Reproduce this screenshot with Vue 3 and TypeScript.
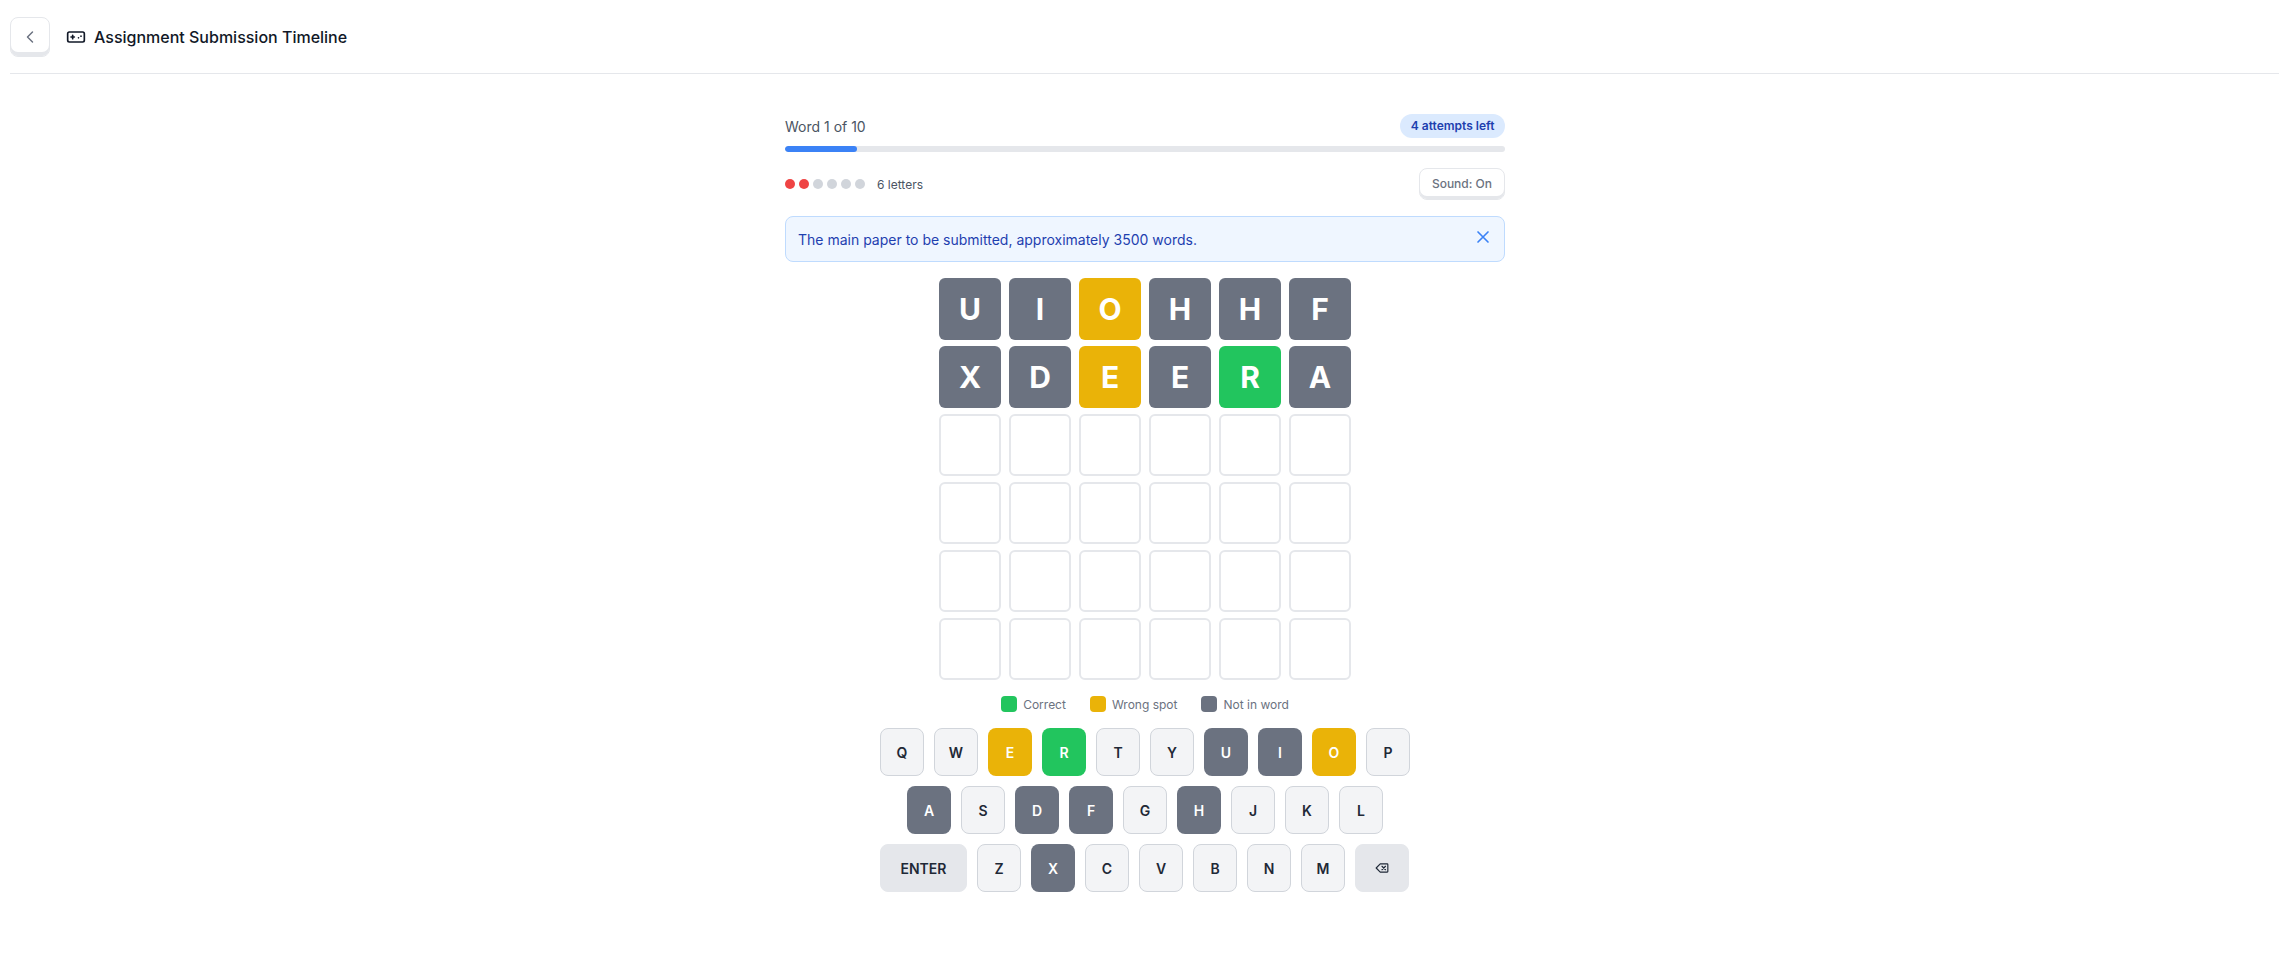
<template>
  <div class="page">
    <header class="top-bar">
      <button class="back-btn" aria-label="Back">
        <svg width="20" height="20" viewBox="0 0 24 24" fill="none" stroke="currentColor" stroke-width="1.75" stroke-linecap="round" stroke-linejoin="round"><path d="M15 18l-6-6 6-6" /></svg>
      </button>
      <svg class="game-icon" width="20" height="20" viewBox="0 0 24 24" fill="none" stroke="currentColor" stroke-width="2" stroke-linecap="round" stroke-linejoin="round">
        <rect x="2" y="6" width="20" height="12" rx="2" />
        <path d="M6 12h4M8 10v4M15 13h.01M18 11h.01" />
      </svg>
      <h1 class="title">Assignment Submission Timeline</h1>
    </header>

    <main class="game">
      <div class="progress-head">
        <span class="word-count">Word 1 of 10</span>
        <span class="attempts">4 attempts left</span>
      </div>
      <div class="progress-track"><div class="progress-fill" :style="{ width: progress + '%' }"></div></div>

      <div class="meta-row">
        <div class="meta-left">
          <div class="dots">
            <span v-for="(used, i) in dots" :key="i" class="dot" :class="{ used }"></span>
          </div>
          <span class="letters">6 letters</span>
        </div>
        <button class="sound-btn">Sound: On</button>
      </div>

      <div class="hint">
        <span>The main paper to be submitted, approximately 3500 words.</span>
        <svg class="hint-close" width="20" height="20" viewBox="0 0 24 24" fill="none" stroke="currentColor" stroke-width="2" stroke-linecap="round" stroke-linejoin="round"><path d="M18 6L6 18M6 6l12 12" /></svg>
      </div>

      <div class="board">
        <div v-for="(row, r) in board" :key="r" class="board-row">
          <div v-for="(cell, c) in row" :key="c" class="tile" :class="cell.state">{{ cell.letter }}</div>
        </div>
      </div>

      <div class="legend">
        <span class="legend-item"><i class="swatch correct"></i>Correct</span>
        <span class="legend-item"><i class="swatch present"></i>Wrong spot</span>
        <span class="legend-item"><i class="swatch absent"></i>Not in word</span>
      </div>

      <div class="keyboard">
        <div v-for="(row, r) in keyRows" :key="r" class="key-row">
          <button v-for="k in row" :key="k" class="key" :class="keyClass(k)">
            <svg v-if="k === 'BACK'" width="14" height="14" viewBox="0 0 24 24" fill="none" stroke="currentColor" stroke-width="2" stroke-linecap="round" stroke-linejoin="round">
              <path d="M21 5H9l-7 7 7 7h12a1 1 0 0 0 1-1V6a1 1 0 0 0-1-1z" />
              <path d="M18 9l-6 6M12 9l6 6" />
            </svg>
            <template v-else>{{ k }}</template>
          </button>
        </div>
      </div>
    </main>
  </div>
</template>

<script setup lang="ts">
type CellState = 'absent' | 'present' | 'correct' | 'empty';

interface Cell {
  letter: string;
  state: CellState;
}

const progress = 10;
const dots: boolean[] = [true, true, false, false, false, false];

const g: CellState = 'absent';
const y: CellState = 'present';
const v: CellState = 'correct';

function makeRow(word: string, states: CellState[]): Cell[] {
  return states.map((state, i) => ({ letter: word[i], state }));
}

const emptyRow = (): Cell[] => Array.from({ length: 6 }, () => ({ letter: '', state: 'empty' as CellState }));

const board: Cell[][] = [
  makeRow('UIOHHF', [g, g, y, g, g, g]),
  makeRow('XDEERA', [g, g, y, g, v, g]),
  emptyRow(),
  emptyRow(),
  emptyRow(),
  emptyRow(),
];

const keyRows: string[][] = [
  ['Q', 'W', 'E', 'R', 'T', 'Y', 'U', 'I', 'O', 'P'],
  ['A', 'S', 'D', 'F', 'G', 'H', 'J', 'K', 'L'],
  ['ENTER', 'Z', 'X', 'C', 'V', 'B', 'N', 'M', 'BACK'],
];

const keyStates: Record<string, CellState> = {
  E: 'present', O: 'present', R: 'correct',
  U: 'absent', I: 'absent', A: 'absent', D: 'absent', F: 'absent', H: 'absent', X: 'absent',
};

function keyClass(k: string): string {
  if (k === 'ENTER') return 'wide';
  if (k === 'BACK') return 'wide back';
  return keyStates[k] || '';
}
</script>

<style>
html, body {
  margin: 0;
  background: #fff;
}
</style>

<style scoped>
.page {
  padding: 0 16px 0 10px;
  font-family: Inter, "Liberation Sans", sans-serif;
  color: #111827;
  min-height: 971px;
  box-sizing: border-box;
}

.top-bar {
  margin-right: 1px;
  padding: 17px 0 16px;
  display: flex;
  align-items: center;
  border-bottom: 1px solid #e5e7eb;
}

.back-btn {
  width: 40px;
  height: 40px;
  margin-right: 16px;
  display: flex;
  align-items: center;
  justify-content: center;
  padding: 0;
  background: #fff;
  border: 1px solid #e5e7eb;
  border-radius: 8px;
  box-shadow: inset 0 -4px 0 #e5e7eb;
  color: #6b7280;
}

.game-icon {
  color: #111827;
  margin-right: 8px;
}

.title {
  margin: 0;
  font-size: 16px;
  font-weight: 500;
  line-height: 24px;
}

.game {
  width: 720px;
  margin: 0 auto;
  padding-top: 40px;
}

.progress-head {
  display: flex;
  justify-content: space-between;
  align-items: center;
  height: 24px;
  margin-bottom: 8px;
}

.word-count {
  font-size: 14px;
  color: #4b5563;
}

.attempts {
  background: #dbeafe;
  color: #1e40af;
  font-size: 12px;
  font-weight: 600;
  line-height: 24px;
  padding: 0 10.5px;
  border-radius: 12px;
}

.progress-track {
  height: 6px;
  background: #e5e7eb;
  border-radius: 3px;
  overflow: hidden;
}

.progress-fill {
  height: 100%;
  background: #3b82f6;
  border-radius: 3px;
}

.meta-row {
  display: flex;
  justify-content: space-between;
  align-items: center;
  margin-top: 16px;
}

.meta-left {
  display: flex;
  align-items: center;
  gap: 12px;
}

.dots {
  display: flex;
  gap: 4px;
}

.dot {
  width: 10px;
  height: 10px;
  border-radius: 50%;
  background: #d1d5db;
}

.dot.used {
  background: #ef4444;
}

.letters {
  font-size: 12px;
  color: #4b5563;
}

.sound-btn {
  height: 32px;
  padding: 0 12px 1px;
  font-family: inherit;
  font-size: 12px;
  font-weight: 500;
  color: #6b7280;
  background: #fff;
  border: 1px solid #e5e7eb;
  border-radius: 8px;
  box-shadow: inset 0 -3px 0 #e5e7eb;
}

.hint {
  margin-top: 16px;
  height: 46px;
  box-sizing: border-box;
  display: flex;
  justify-content: space-between;
  align-items: center;
  padding: 0 11px 0 12px;
  background: #eff6ff;
  border: 1px solid #bfdbfe;
  border-radius: 8px;
  color: #1e40af;
  font-size: 14px;
}

.hint-close {
  color: #3b82f6;
  margin-top: -4px;
}

.board {
  margin-top: 16px;
  display: flex;
  flex-direction: column;
  align-items: center;
  gap: 6px;
}

.board-row {
  display: flex;
  gap: 8px;
}

.tile {
  width: 62px;
  height: 62px;
  box-sizing: border-box;
  display: flex;
  align-items: center;
  justify-content: center;
  border-radius: 6px;
  font-size: 30px;
  font-weight: 700;
  color: #fff;
}

.tile.empty {
  background: #fff;
  border: 2px solid #e5e7eb;
}

.tile.absent { background: #6b7280; }
.tile.present { background: #eab308; }
.tile.correct { background: #22c55e; }

.legend {
  margin-top: 16px;
  display: flex;
  justify-content: center;
  gap: 24px;
  height: 16px;
}

.legend-item {
  display: flex;
  align-items: center;
  gap: 6px;
  font-size: 12px;
  color: #6b7280;
}

.swatch {
  width: 16px;
  height: 16px;
  border-radius: 4px;
}

.swatch.correct { background: #22c55e; }
.swatch.present { background: #eab308; }
.swatch.absent { background: #6b7280; }

.keyboard {
  margin-top: 16px;
  display: flex;
  flex-direction: column;
  align-items: center;
  gap: 10px;
}

.key-row {
  display: flex;
  gap: 10px;
}

.key-row:last-child {
  margin-right: 1px;
}

.key {
  width: 44px;
  height: 48px;
  padding: 0;
  display: flex;
  align-items: center;
  justify-content: center;
  font-family: inherit;
  font-size: 14px;
  font-weight: 600;
  color: #1f2937;
  background: #f3f4f6;
  border: 1px solid #d1d5db;
  border-radius: 8px;
}

.key.wide {
  width: 87px;
  background: #e5e7eb;
  border-color: #e5e7eb;
}

.key.back {
  width: 54px;
}

.key.absent,
.key.present,
.key.correct {
  color: #fff;
  border-color: transparent;
}

.key.absent { background: #6b7280; }
.key.present { background: #eab308; }
.key.correct { background: #22c55e; }
</style>
